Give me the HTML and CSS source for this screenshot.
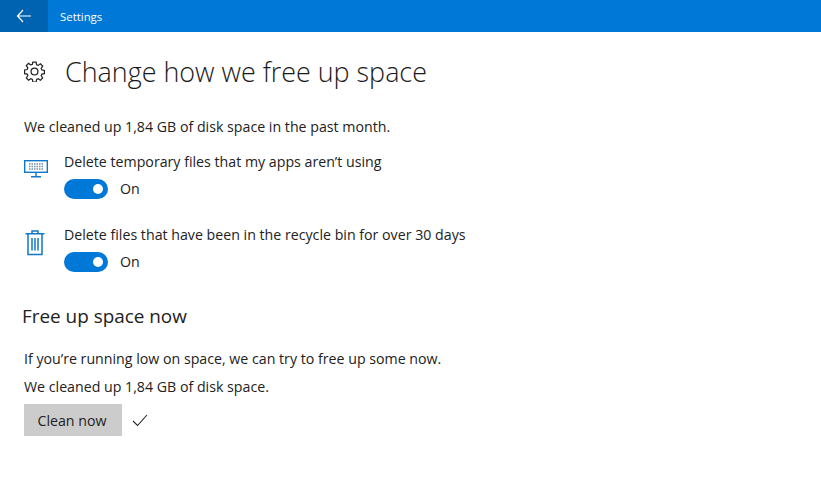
FILE: index.html
```html
<!DOCTYPE html>
<html lang="en">

<head>
    <meta charset="UTF-8">
    <meta name="viewport" content="width=device-width, initial-scale=1.0">
    <title>Settings</title>
    <link rel="stylesheet" href="styles.css">
</head>

<body>
    <header class="titlebar">
        <div class="back">
            <svg width="16" height="14" viewBox="0 0 16 14" fill="none" stroke="#fff" stroke-width="1.2">
                <path d="M7 1 1.5 7 7 13M1.5 7H15" />
            </svg>
        </div>
        <span class="app-name">Settings</span>
    </header>

    <main class="content">
        <div class="page-head">
            <svg class="gear" width="21" height="21" viewBox="0 0 22 22" fill="none" stroke="#222" stroke-width="1.3">
                <path d="M9.3 1.2h3.4l.5 2.7 1.7.7 2.3-1.6 2.4 2.4-1.6 2.3.7 1.7 2.700.5v3.400l-2.700.5-.7 1.700 1.600 2.300-2.400 2.400-2.300-1.600-1.700.7-.5 2.700H9.300l-.5-2.700-1.700-.7-2.300 1.600-2.400-2.400 1.600-2.300-.7-1.700-2.700-.5V9.400l2.700-.5.7-1.700-1.600-2.300 2.400-2.400 2.300 1.600 1.700-.7z" />
                <circle cx="11" cy="11" r="3.600" />
            </svg>
            <h1>Change how we free up space</h1>
        </div>

        <p class="summary">We cleaned up 1,84 GB of disk space in the past month.</p>

        <div class="option option-keyboard">
            <svg class="option-icon" width="24" height="18" viewBox="0 0 24 18" fill="none" stroke="#0f78c8" stroke-width="1.4">
                <rect x="0.700" y="0.700" width="22.600" height="11.600" />
                <path d="M12 12.500v3.500M7 16.800h10" />
                <path d="M5 4h14M5 6.500h14M5 9h14" stroke="#6f8fa8" stroke-dasharray="1.500 1" stroke-width="1.400" />
            </svg>
            <div class="option-body">
                <div class="option-label">Delete temporary files that my apps aren’t using</div>
                <div class="toggle-row">
                    <span class="toggle"></span>
                    <span>On</span>
                </div>
            </div>
        </div>

        <div class="option option-bin">
            <svg class="option-icon" width="24" height="26" viewBox="0 0 24 26" fill="none" stroke="#0f78c8" stroke-width="1.500">
                <path d="M1.500 3.700h19M8 3.500V1h6v2.500M4 4v20.500h14V4M8 8v12.500M11 8v12.500M14 8v12.500" />
            </svg>
            <div class="option-body">
                <div class="option-label">Delete files that have been in the recycle bin for over 30 days</div>
                <div class="toggle-row">
                    <span class="toggle"></span>
                    <span>On</span>
                </div>
            </div>
        </div>

        <h2>Free up space now</h2>
        <p class="low-space">If you’re running low on space, we can try to free up some now.</p>
        <p class="cleaned">We cleaned up 1,84 GB of disk space.</p>

        <div class="clean-row">
            <button type="button" class="clean-btn">Clean now</button>
            <svg width="16" height="13" viewBox="0 0 16 13" fill="none" stroke="#222" stroke-width="1.100">
                <path d="M1 7l4.500 4.500L15 1" />
            </svg>
        </div>
    </main>
</body>

</html>
```

FILE: styles.css
```css
* {
    margin: 0;
    padding: 0;
    box-sizing: border-box;
    font-family: "Open Sans", "Noto Sans", Arial, sans-serif;
}

body {
    background: #fff;
    color: #222;
    font-size: 14.200px;
    overflow: hidden;
}

.titlebar {
    height: 32px;
    display: flex;
    align-items: center;
    background: #0078d7;
    color: #fff;
}

.back {
    width: 48px;
    height: 32px;
    display: flex;
    align-items: center;
    justify-content: center;
    background: #0063b1;
}

.app-name {
    margin-left: 12px;
    font-size: 11.400px;
}

.content {
    padding-left: 24px;
}

.page-head {
    display: flex;
    align-items: center;
    margin-top: 21px;
    height: 36px;
}

h1 {
    margin-left: 20px;
    font-size: 26.900px;
    font-weight: 300;
    color: #1a1a1a;
}

.summary {
    margin-top: 28px;
    line-height: 20px;
}

.option {
    display: flex;
}

.option-keyboard {
    margin-top: 15px;
}

.option-bin {
    margin-top: 26px;
}

.option-icon {
    flex: none;
    margin-top: 5px;
    margin-right: 16px;
}

.option-keyboard .option-icon {
    margin-top: 8px;
}

.option-label {
    line-height: 20px;
}

.toggle-row {
    display: flex;
    align-items: center;
    gap: 12px;
    margin-top: 7px;
    line-height: 20px;
}

.toggle {
    position: relative;
    width: 44px;
    height: 20px;
    border-radius: 10px;
    background: #0078d7;
}

.toggle::after {
    content: "";
    position: absolute;
    right: 5px;
    top: 5px;
    width: 10px;
    height: 10px;
    border-radius: 50%;
    background: #fff;
}

h2 {
    margin-top: 31px;
    margin-left: -2px;
    font-size: 18.900px;
    font-weight: 400;
    line-height: 26px;
}

.low-space {
    margin-top: 20px;
    line-height: 20px;
}

.cleaned {
    margin-top: 8px;
    line-height: 20px;
}

.clean-row {
    display: flex;
    align-items: center;
    gap: 10px;
    margin-top: 7px;
}

.clean-btn {
    width: 98px;
    height: 32px;
    padding-right: 2px;
    border: 0;
    background: #ccc;
    color: #222;
    font-size: 14.200px;
}
```
